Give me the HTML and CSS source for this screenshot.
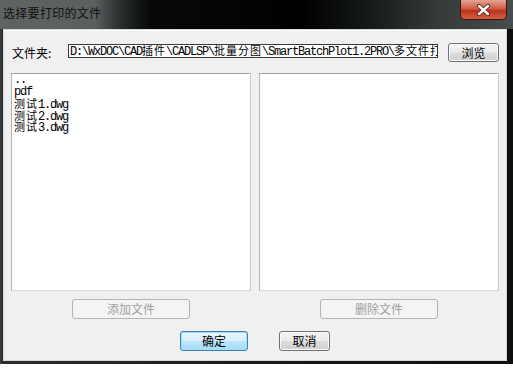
FILE: index.html
```html
<!DOCTYPE html>
<html lang="zh-CN">
<head>
    <meta charset="UTF-8">
    <title>选择要打印的文件</title>
    <link rel="stylesheet" href="styles.css">
</head>
<body>
    <div class="okno">
        <div class="naslov">
            <span class="naslov-tekst">选择要打印的文件</span>
            <div class="zapri">
                <svg width="47" height="20" viewBox="0 0 47 20">
                    <defs>
                        <linearGradient id="rdeca" x1="0" y1="0" x2="0" y2="1">
                            <stop offset="0" stop-color="#e3a596"/>
                            <stop offset="0.45" stop-color="#cf5a44"/>
                            <stop offset="0.55" stop-color="#b8321c"/>
                            <stop offset="1" stop-color="#d86443"/>
                        </linearGradient>
                    </defs>
                    <path d="M0.5 0 V15.5 Q0.5 19.5 4.5 19.5 H42.5 Q46.5 19.5 46.5 15.5 V0" fill="url(#rdeca)" stroke="#3b1510"/>
                    <path d="M19 6 L28 14 M28 6 L19 14" stroke="#5a2015" stroke-width="4.2" stroke-linecap="round"/>
                    <path d="M19 6 L28 14 M28 6 L19 14" stroke="#fff" stroke-width="2.4" stroke-linecap="round"/>
                </svg>
            </div>
        </div>
        <div class="vsebina">
            <div class="vrstica-mapa">
                <span class="oznaka">文件夹:</span>
                <div class="pot">D:\WxDOC\CAD<span class="cjk">插件</span>\CADLSP\<span class="cjk">批量分图</span>\SmartBatchPlot1.2PRO\<span class="cjk">多文件打印</span></div>
                <button class="gumb">浏览</button>
            </div>
            <div class="seznami">
                <ul class="seznam">
                    <li>..</li>
                    <li>pdf</li>
                    <li><span class="cjk">测试</span>1.dwg</li>
                    <li><span class="cjk">测试</span>2.dwg</li>
                    <li><span class="cjk">测试</span>3.dwg</li>
                </ul>
                <ul class="seznam"></ul>
                <button class="gumb siv" disabled>添加文件</button>
                <button class="gumb siv" disabled>删除文件</button>
            </div>
            <div class="akcije">
                <button class="gumb privzeti" id="potrdi">确定</button>
                <button class="gumb" id="preklici">取消</button>
            </div>
        </div>
    </div>
</body>
</html>
```

FILE: styles.css
```css
body {
    margin: 0;
    background-color: #fff;
    font-family: "Noto Sans CJK SC", "Liberation Sans", sans-serif;
    font-size: 12px;
    overflow: hidden;
}

.okno {
    width: 513px;
    height: 364px;
    box-sizing: border-box;
    padding: 0 6px 3px 3px;
    background: linear-gradient(90deg, #3a3e3e 0, #2a2e2e 3px, #151818 60%, #0c0f0f 100%);
    display: flex;
    flex-direction: column;
}

.naslov {
    height: 29px;
    margin: 0 -6px 0 -3px;
    display: flex;
    align-items: flex-start;
    background: linear-gradient(90deg, #5f6363 0, #5b5f5f 95px, #2a2e2e 120px, #070909 150px, #000 300px, #151a1a 370px, #353a3a 440px, #474c4c 513px);
}

.naslov-tekst {
    padding: 5px 0 0 3px;
    line-height: 16px;
    font-size: 12px;
    letter-spacing: 0.3px;
    color: #111;
}

.zapri {
    margin-left: auto;
    margin-right: 6px;
    height: 20px;
}

.zapri svg {
    display: block;
}

.vsebina {
    flex: 1;
    background-color: #f0f0f0;
    border: 1px solid #d6d8d8;
    box-shadow: inset 0 1px 0 #ffffff;
    padding: 13px 7px 0 7px;
    display: flex;
    flex-direction: column;
}

.vrstica-mapa {
    display: flex;
    align-items: flex-start;
    height: 19px;
}

.oznaka {
    width: 56px;
    padding-left: 1px;
    margin-top: 3px;
    line-height: 14px;
    color: #000;
}

.pot,
.seznam {
    font-family: "Liberation Mono", monospace;
    font-size: 12px;
    letter-spacing: -1.2px;
    color: #000;
}

.cjk {
    font-family: "Noto Sans CJK SC", sans-serif;
    font-size: 11px;
    letter-spacing: 1px;
    line-height: 11px;
}

.pot {
    width: 370px;
    height: 14px;
    box-sizing: border-box;
    margin-top: 1px;
    padding-left: 1px;
    border: 1px solid #3a3a3a;
    background-color: #fff;
    line-height: 12px;
    white-space: nowrap;
    overflow: hidden;
}

.gumb {
    height: 20px;
    padding: 0;
    box-sizing: border-box;
    font-family: "Noto Sans CJK SC", sans-serif;
    font-size: 12px;
    line-height: 16px;
    color: #000;
    border: 1px solid #707070;
    border-radius: 3px;
    background: linear-gradient(#f3f3f3 0%, #ebebeb 48%, #dddddd 52%, #cfcfcf 100%);
    box-shadow: inset 0 0 0 1px #fbfbfb;
}

.vrstica-mapa .gumb {
    margin-left: 10px;
    width: 51px;
    height: 19px;
}

.seznami {
    margin-top: 11px;
    display: grid;
    grid-template-columns: 240px 240px;
    column-gap: 8px;
    row-gap: 8px;
}

.seznam {
    margin: 0;
    padding: 1px 0 0 2px;
    list-style: none;
    height: 218px;
    box-sizing: border-box;
    background-color: #fff;
    border: 1px solid;
    border-color: #9ea2a6 #c6c9cc #d6d8da #b4b7ba;
    line-height: 11.6px;
}

.seznam li {
    height: 11.6px;
    white-space: nowrap;
}

.siv {
    width: 118px;
    justify-self: center;
    color: #a0a0a0;
    border-color: #b2b5b8;
    background: #f4f4f4;
    box-shadow: none;
}

.akcije {
    margin-top: 12px;
    display: flex;
    justify-content: center;
    gap: 31px;
}

#potrdi {
    width: 68px;
}

#preklici {
    width: 51px;
}

.privzeti {
    border-color: #3c7fb1;
    background: linear-gradient(#eaf6fd 0%, #d9f0fc 48%, #bee6fd 52%, #a7d9f5 100%);
    box-shadow: inset 0 0 0 1px #9fe0fa;
}
```
